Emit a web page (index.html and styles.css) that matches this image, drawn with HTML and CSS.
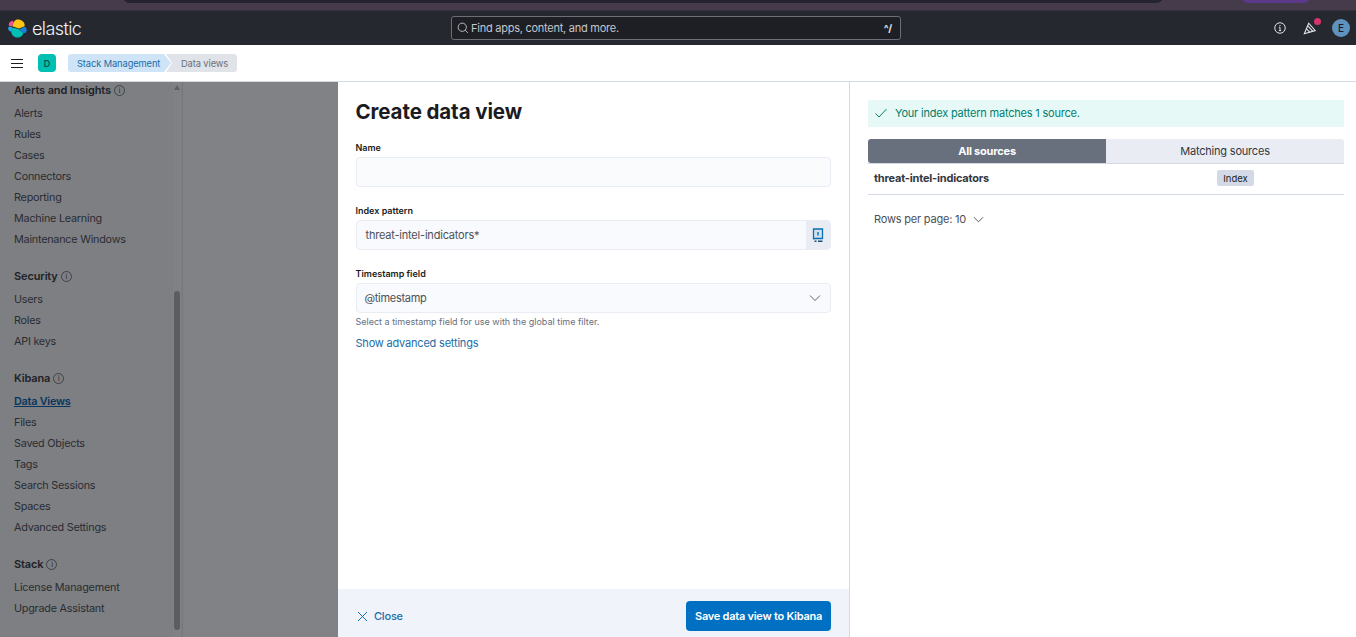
FILE: index.html
```html
<!DOCTYPE html>
<html lang="en">
<head>
    <meta charset="UTF-8">
    <title>Create data view - Elastic</title>
    <link rel="stylesheet" href="styles.css">
</head>
<body>
    <!-- Strip of the browser window above the app -->
    <div class="browser-strip">
        <div class="strip-tab"></div>
        <div class="strip-pill"></div>
    </div>

    <header class="top-header">
        <div class="brand">
            <svg class="brand-mark" width="19" height="19" viewBox="0 0 20 20">
                <path d="M4.500 7.500 L11.500 10 L17.500 7.500 C18 3 14 .5 10.500 .5 C8 .5 5.500 2.500 4.500 7.500Z" fill="#fec514"/>
                <path d="M3.500 11 C2.500 16 6 19.500 10 19.500 C13 19.500 16 17.500 16 14.500 L11.500 10.800 L5 9 Z" fill="#00bfb3"/>
                <path d="M4 2 C1.500 2.500 .3 5 1 7 L4.200 8 L5.800 3.500 C5.500 2.300 5 1.800 4 2Z" fill="#f04e98"/>
                <path d="M1 7.800 C-.3 9.500 0 12 2 13 L3.400 13.300 L4.300 8.800 Z" fill="#1ba9f5"/>
                <path d="M12 10.800 L17.500 8.200 C19 8.700 20 10.500 19.700 12.200 C19.300 14.200 17.800 15.500 16 14.800 Z" fill="#1b7fd5"/>
            </svg>
            <span class="brand-name">elastic</span>
        </div>
        <div class="global-search">
            <svg width="12" height="12" viewBox="0 0 16 16" fill="none" stroke="#c8cad0" stroke-width="1.200">
                <circle cx="7" cy="7" r="5.500"/>
                <path d="M11 11l3.500 3.500"/>
            </svg>
            <span class="search-text">Find apps, content, and more.</span>
            <span class="search-keys">^/</span>
        </div>
        <div class="header-actions">
            <svg width="12" height="12" viewBox="0 0 16 16" fill="none" stroke="#e6e7ea" stroke-width="1.300">
                <circle cx="8" cy="8" r="7"/>
                <path d="M8 7v4.500M6.500 11.500h3M6.500 7H8M8 4v1.300"/>
            </svg>
            <div class="news-icon">
                <svg width="14" height="14" viewBox="0 0 16 16" fill="none" stroke="#e6e7ea" stroke-width="1.200">
                    <path d="M1.500 14.500 L6.500 2.500 L14 11 Z"/>
                    <path d="M4 9l4 4M5.500 5.500l5.500 6"/>
                </svg>
                <span class="news-dot"></span>
            </div>
            <span class="user-avatar">E</span>
        </div>
    </header>

    <div class="crumb-bar">
        <div class="menu-toggle"><span></span><span></span><span></span></div>
        <span class="space-badge">D</span>
        <nav class="crumbs">
            <span class="crumb crumb-link">Stack Management</span>
            <span class="crumb crumb-current">Data views</span>
        </nav>
    </div>

    <div class="workspace">
        <aside class="sidenav">
            <div class="sidenav-list">
                <section class="nav-group nav-group-first">
                    <h4>Alerts and Insights <i class="help-dot">i</i></h4>
                    <a>Alerts</a>
                    <a>Rules</a>
                    <a>Cases</a>
                    <a>Connectors</a>
                    <a>Reporting</a>
                    <a>Machine Learning</a>
                    <a>Maintenance Windows</a>
                </section>
                <section class="nav-group">
                    <h4>Security <i class="help-dot">i</i></h4>
                    <a>Users</a>
                    <a>Roles</a>
                    <a>API keys</a>
                </section>
                <section class="nav-group">
                    <h4>Kibana <i class="help-dot">i</i></h4>
                    <a class="active">Data Views</a>
                    <a>Files</a>
                    <a>Saved Objects</a>
                    <a>Tags</a>
                    <a>Search Sessions</a>
                    <a>Spaces</a>
                    <a>Advanced Settings</a>
                </section>
                <section class="nav-group">
                    <h4>Stack <i class="help-dot">i</i></h4>
                    <a>License Management</a>
                    <a>Upgrade Assistant</a>
                </section>
            </div>
            <div class="nav-scrollbar">
                <span class="scroll-arrow"></span>
                <span class="scroll-thumb"></span>
            </div>
        </aside>

        <div class="backdrop"></div>

        <main class="flyout">
            <div class="flyout-body">
                <h1>Create data view</h1>

                <div class="form-row">
                    <label>Name</label>
                    <div class="field"></div>
                </div>

                <div class="form-row">
                    <label>Index pattern</label>
                    <div class="field field-appended">
                        <span class="field-value">threat-intel-indicators*</span>
                        <span class="field-append">
                            <svg width="12" height="14" viewBox="0 0 12 14" fill="none" stroke="#0a6eb4" stroke-width="1.300">
                                <path d="M1.500 11.500V1h9v9.500H3c-.9 0-1.500.4-1.500 1Z" fill="#cfe1ef"/>
                                <path d="M6 4v3.500" stroke-width="1.400"/>
                                <path d="M2.500 13.300h2M6 13.300h4.500" stroke="#1a4f78" stroke-width="1.400"/>
                            </svg>
                        </span>
                    </div>
                </div>

                <div class="form-row form-row-help">
                    <label>Timestamp field</label>
                    <div class="field field-select">
                        <span class="field-value">@timestamp</span>
                        <svg width="12" height="12" viewBox="0 0 12 12" fill="none" stroke="#5f636b" stroke-width="1">
                            <path d="M1 3.500l5 5 5-5"/>
                        </svg>
                    </div>
                    <p class="field-help">Select a timestamp field for use with the global time filter.</p>
                </div>

                <a class="advanced-link">Show advanced settings</a>
            </div>

            <footer class="flyout-footer">
                <a class="close-link">
                    <svg width="11" height="11" viewBox="0 0 11 11" fill="none" stroke="#0f6cad" stroke-width="1">
                        <path d="M1 1l9 9M10 1l-9 9"/>
                    </svg>
                    Close
                </a>
                <button class="save-button">Save data view to Kibana</button>
            </footer>
        </main>

        <section class="preview">
            <div class="match-callout">
                <svg width="12" height="10" viewBox="0 0 12 10" fill="none" stroke="#00806e" stroke-width="1">
                    <path d="M.5 5.500l3.500 3.500 7.500-8"/>
                </svg>
                <span>Your index pattern matches 1 source.</span>
            </div>

            <div class="source-tabs">
                <span class="source-tab source-tab-on">All sources</span>
                <span class="source-tab">Matching sources</span>
            </div>

            <div class="source-row">
                <span class="source-name">threat-intel-indicators</span>
                <span class="source-type">Index</span>
            </div>

            <div class="rows-per-page">
                Rows per page: 10
                <svg width="11" height="11" viewBox="0 0 12 12" fill="none" stroke="#4c5058" stroke-width="1">
                    <path d="M1 3.500l5 5 5-5"/>
                </svg>
            </div>
        </section>
    </div>
</body>
</html>
```

FILE: styles.css
```css
/* Basic reset */
html, body {
    margin: 0;
    padding: 0;
    height: 100%;
    overflow: hidden;
}

body {
    font-family: Inter, "Liberation Sans", sans-serif;
    font-size: 11px;
    letter-spacing: -0.2px;
    color: #343741;
    background-color: #fff;
}

a {
    color: inherit;
    text-decoration: none;
}

/* --- Browser strip --- */
.browser-strip {
    height: 10px;
    position: relative;
    background-color: #463b4b;
    overflow: hidden;
}

.strip-tab {
    position: absolute;
    left: 122px;
    top: -8px;
    width: 1042px;
    height: 11px;
    background-color: #25232e;
    border-radius: 0 0 8px 8px;
}

.strip-pill {
    position: absolute;
    left: 1242px;
    top: -8px;
    width: 68px;
    height: 11px;
    background-color: #5b3a8c;
    border-radius: 0 0 6px 6px;
}

/* --- Top header --- */
.top-header {
    height: 35px;
    box-sizing: border-box;
    background-color: #25282f;
    border-top: 1px solid #33303a;
    display: flex;
    align-items: center;
    padding: 0 6px 0 8px;
    position: relative;
}

.brand {
    display: flex;
    align-items: center;
    gap: 5px;
    width: 443px;
    flex: none;
}

.brand-name {
    font-size: 18px;
    font-weight: 300;
    color: #f2f3f5;
    letter-spacing: -0.6px;
}

.global-search {
    width: 450px;
    height: 24px;
    box-sizing: border-box;
    flex: none;
    display: flex;
    align-items: center;
    gap: 2px;
    padding: 0 8px 0 5px;
    background-color: #1d1f25;
    border: 1px solid #6c6f78;
    border-radius: 3px;
}

.search-text {
    flex: 1;
    letter-spacing: -0.25px;
    color: #c4c6cc;
}

.search-keys {
    color: #e6e7ea;
    font-size: 10px;
    font-weight: 700;
}

.header-actions {
    margin-left: auto;
    display: flex;
    align-items: center;
    gap: 17px;
}

.news-icon {
    position: relative;
    height: 14px;
    margin-right: -2px;
}

.news-dot {
    position: absolute;
    top: -3px;
    right: -4px;
    width: 7px;
    height: 7px;
    border-radius: 50%;
    background-color: #d6336c;
}

.user-avatar {
    width: 18px;
    height: 18px;
    border-radius: 50%;
    background-color: #6092c0;
    color: #1a1c21;
    font-size: 10px;
    font-weight: 500;
    display: flex;
    align-items: center;
    justify-content: center;
}

/* --- Breadcrumb bar --- */
.crumb-bar {
    height: 37px;
    box-sizing: border-box;
    background-color: #fff;
    border-bottom: 1px solid #d3dae6;
    display: flex;
    align-items: center;
    padding: 0 0 0 11px;
}

.menu-toggle {
    width: 12px;
    display: flex;
    flex-direction: column;
    gap: 3px;
    margin-right: 15px;
}

.menu-toggle span {
    height: 1px;
    background-color: #1a1c21;
}

.space-badge {
    width: 18px;
    height: 18px;
    border-radius: 4px;
    background-color: #00bfb3;
    color: #14423e;
    font-size: 9px;
    font-weight: 500;
    display: flex;
    align-items: center;
    justify-content: center;
    margin-right: 12px;
}

.crumbs {
    display: flex;
    height: 18px;
}

.crumb {
    display: flex;
    align-items: center;
    font-size: 9.300px;
    letter-spacing: -0.1px;
}

.crumb-link {
    width: 103px;
    padding-left: 9px;
    box-sizing: border-box;
    background-color: #cfe4f6;
    color: #1c6ba8;
    border-radius: 3px 0 0 3px;
    clip-path: polygon(0 0, 96px 0, 100% 50%, 96px 100%, 0 100%);
}

.crumb-current {
    width: 71px;
    margin-left: -5px;
    padding-left: 15px;
    box-sizing: border-box;
    background-color: #e0e3e8;
    color: #69707d;
    border-radius: 0 3px 3px 0;
    clip-path: polygon(0 0, 100% 0, 100% 100%, 0 100%, 6px 50%);
}

/* --- Main area --- */
.workspace {
    height: 555px;
    display: grid;
    grid-template-columns: 183px 155px 512px 506px;
}

/* --- Side nav (under the mask) --- */
.sidenav {
    position: relative;
    background-color: #7e7f83;
    border-right: 1px solid #76777b;
    box-sizing: border-box;
    overflow: hidden;
}

.sidenav-list {
    padding: 0 0 0 14px;
    color: #2a2c31;
}

.nav-group {
    margin-top: 18px;
}

.nav-group-first {
    margin-top: 0;
}

.nav-group h4 {
    margin: 0;
    font-size: 11px;
    font-weight: 600;
    letter-spacing: -0.13px;
    line-height: 17px;
    padding-bottom: 4px;
    display: flex;
    align-items: center;
    gap: 3px;
    color: #202227;
}

.nav-group a {
    display: block;
    font-size: 10.800px;
    letter-spacing: -0.22px;
    line-height: 21px;
}

.nav-group a.active {
    font-weight: 600;
    color: #06365c;
    text-decoration: underline;
}

.help-dot {
    width: 9px;
    height: 9px;
    border: 1px solid #3f4147;
    border-radius: 50%;
    font-size: 7px;
    font-style: normal;
    font-weight: 400;
    line-height: 9px;
    text-align: center;
}

.nav-scrollbar {
    position: absolute;
    top: 0;
    right: 1px;
    width: 8px;
    bottom: 0;
    background-color: #808185;
}

.scroll-arrow {
    position: absolute;
    top: 3px;
    left: 1px;
    border-left: 3px solid transparent;
    border-right: 3px solid transparent;
    border-bottom: 5px solid #5e5f63;
}

.scroll-thumb {
    position: absolute;
    top: 209px;
    left: 1px;
    width: 6px;
    height: 339px;
    border-radius: 3px;
    background-color: #5b5d62;
}

.backdrop {
    background-color: #818286;
}

/* --- Flyout --- */
.flyout {
    background-color: #fff;
    border-right: 1px solid #d3dae6;
    box-sizing: border-box;
    display: flex;
    flex-direction: column;
}

.flyout-body {
    flex: 1;
    padding: 17px 18px 0 17.500px;
}

.flyout-body h1 {
    margin: 0 0 17px;
    font-size: 20.500px;
    font-weight: 700;
    letter-spacing: -0.1px;
    line-height: 26px;
    color: #1a1c21;
}

.form-row {
    margin-bottom: 18px;
}

.form-row-help {
    margin-bottom: 8px;
}

.form-row label {
    display: block;
    font-size: 9px;
    font-weight: 600;
    letter-spacing: 0;
    line-height: 12px;
    color: #1a1c21;
    margin-bottom: 3px;
}

.field {
    height: 30px;
    box-sizing: border-box;
    background-color: #fafbfd;
    border: 1px solid #e9edf3;
    border-radius: 4px;
    display: flex;
    align-items: center;
    padding-left: 9px;
    overflow: hidden;
}

.field-value {
    flex: 1;
    color: #4c5058;
}

.field-appended {
    background-color: #f8fafd;
}

.field-append {
    width: 24px;
    height: 100%;
    background-color: #e9edf3;
    display: flex;
    align-items: center;
    justify-content: center;
}

.field-select {
    padding: 0 9px 0 8px;
    background-color: #f8fafd;
}

.field-select .field-value {
    letter-spacing: -0.3px;
}

.field-help {
    margin: 3px 0 0;
    font-size: 9px;
    letter-spacing: 0;
    line-height: 12px;
    color: #69707d;
}

.advanced-link {
    display: block;
    line-height: 14px;
    color: #1b6da8;
}

.flyout-footer {
    height: 48px;
    box-sizing: border-box;
    background-color: #f0f4fa;
    display: flex;
    align-items: center;
    justify-content: space-between;
    padding: 6px 18px 0 19px;
}

.close-link {
    display: flex;
    align-items: center;
    gap: 6px;
    font-weight: 500;
    color: #1b6da8;
}

.save-button {
    width: 145px;
    height: 30px;
    border: 0;
    border-radius: 4px;
    background-color: #0071c2;
    color: #fff;
    font-family: inherit;
    font-size: 11px;
    font-weight: 600;
    letter-spacing: -0.25px;
    padding: 0;
}

/* --- Preview column --- */
.preview {
    background-color: #fff;
    padding: 18px 12px 0 18px;
}

.match-callout {
    height: 27px;
    box-sizing: border-box;
    padding: 0 0 1px 7px;
    background-color: #e6f9f7;
    display: flex;
    align-items: center;
    gap: 8px;
    color: #007e6e;
    margin-bottom: 12px;
}

.source-tabs {
    display: grid;
    grid-template-columns: 238px 1fr;
    height: 24px;
    border-bottom: 1px solid #d3dae6;
}

.source-tab {
    display: flex;
    align-items: center;
    justify-content: center;
    color: #343741;
    background-color: #e9edf3;
    border-radius: 0 3px 0 0;
}

.source-tab-on {
    background-color: #69707d;
    color: #fff;
    font-weight: 700;
    border-radius: 3px 0 0 3px;
}

.source-row {
    height: 30px;
    box-sizing: border-box;
    height: 31px;
    display: flex;
    align-items: center;
    padding: 0 0 2px 6px;
    border-bottom: 1px solid #d3dae6;
}

.source-name {
    width: 343px;
    font-weight: 700;
    color: #343741;
}

.source-type {
    width: 37px;
    height: 16px;
    border-radius: 2px;
    background-color: #d3dae6;
    font-size: 9.500px;
    letter-spacing: 0;
    color: #1a1c21;
    display: flex;
    align-items: center;
    justify-content: center;
}

.rows-per-page {
    margin-top: 17px;
    padding-left: 6px;
    display: flex;
    align-items: center;
    gap: 7px;
    line-height: 14px;
    color: #4c5058;
}
```
